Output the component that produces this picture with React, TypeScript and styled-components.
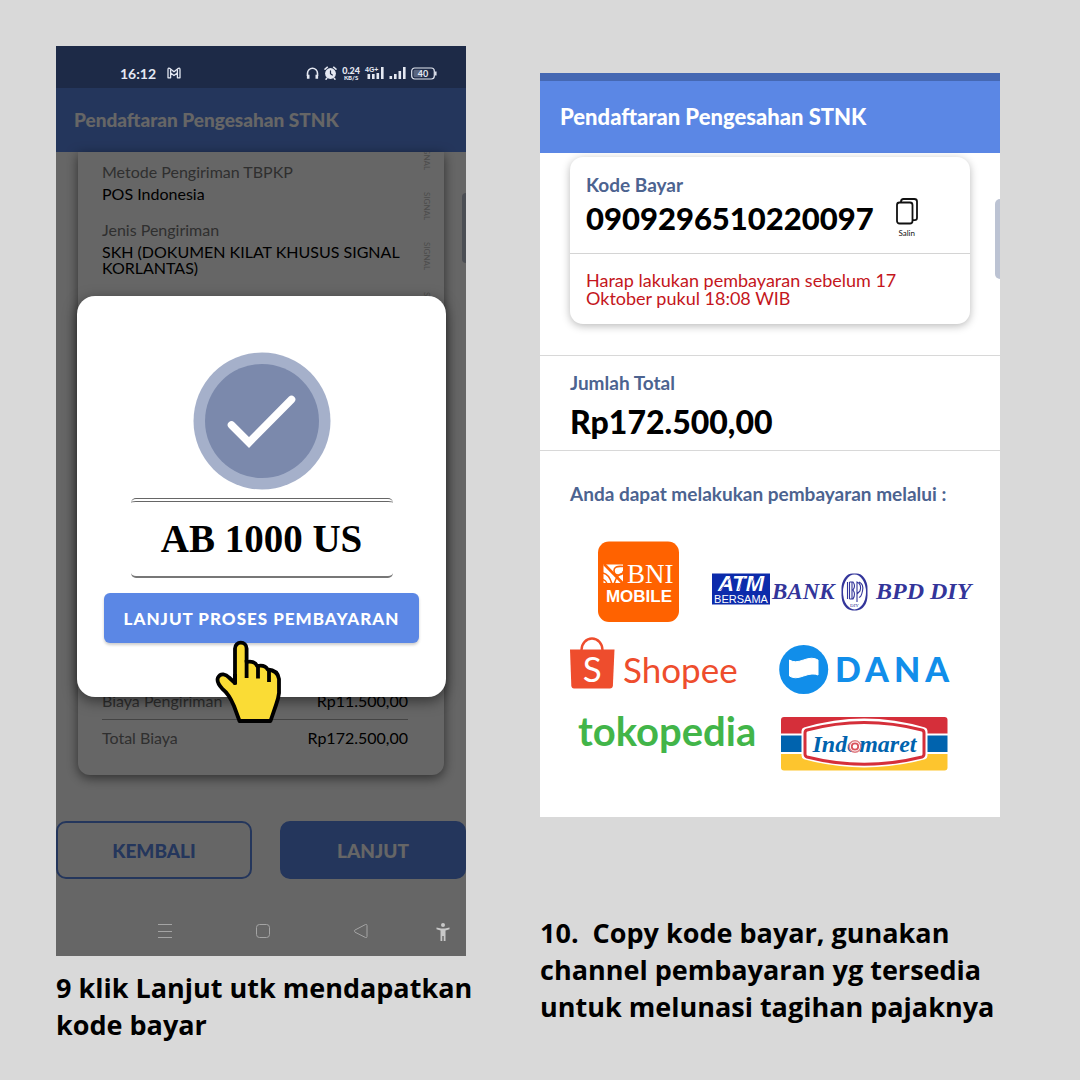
import React from "react";
import styled, { createGlobalStyle } from "styled-components";

const GlobalStyle = createGlobalStyle`
  * { box-sizing: border-box; }
  body { margin: 0; background: #d9d9d9; font-family: Lato, "Liberation Sans", sans-serif; color: #000; }
  p, h2, h3, dl, dt, dd, ul { margin: 0; padding: 0; }
  button { font-family: inherit; cursor: pointer; }
  svg { display: block; flex: none; overflow: visible; }
`;

const Page = styled.main`
  display: grid;
  grid-template-columns: 41fr 46fr;
  column-gap: 74px;
  align-items: start;
  padding: 46px 80px 32px 56px;
`;

const Step = styled.section<{ $top?: number }>`
  padding-top: ${(p) => p.$top ?? 0}px;
  min-width: 0;
`;

const Caption = styled.p<{ $gap: number }>`
  margin-top: ${(p) => p.$gap}px;
  font: 700 27px/37px "Open Sans", "Noto Sans", sans-serif;
  white-space: pre;
`;

const Screen = styled.div`
  position: relative;
  overflow: hidden;
  background: #fff;
`;

const StatusBar = styled.div`
  position: relative;
  z-index: 2;
  display: flex;
  align-items: center;
  height: 42px;
  padding: 12px 29px 0 64px;
  background: #1d2a47;
  color: #e4e8f2;
`;

const Clock = styled.span`
  font-size: 14px;
  font-weight: 700;
  margin-right: 11px;
`;

const StatusIcons = styled.div`
  display: flex;
  align-items: center;
  gap: 5px;
  margin-left: auto;
`;

const NetSpeed = styled.span`
  display: flex;
  flex-direction: column;
  align-items: center;
  font-size: 9px;
  font-weight: 900;
  line-height: 9px;
  small { font-size: 6px; line-height: 6px; }
`;

const AppBar = styled.header<{ $height: number; $size: number; $pad: number }>`
  display: flex;
  align-items: center;
  height: ${(p) => p.$height}px;
  padding-left: ${(p) => p.$pad}px;
  background: #5b87e5;
  color: #fff;
  h2 { font-size: ${(p) => p.$size}px; font-weight: 900; line-height: 24px; }
`;

const Detail = styled.div`
  display: grid;
  grid-template-columns: 1fr auto;
  overflow: hidden;
  margin: 0 22px;
  padding: 10px 12px 19px 24px;
  border-radius: 0 0 12px 12px;
  background: #fff;
  box-shadow: 0 3px 12px rgba(0, 0, 0, 0.55);
`;

const Field = styled.div`
  margin-bottom: 18px;
  font-size: 16px;
  dt { line-height: 20px; color: #777; }
  dd { line-height: 16px; padding-top: 4px; }
`;

const Watermark = styled.div`
  display: flex;
  flex-direction: column;
  align-items: center;
  gap: 20px;
  height: 0;
  margin-top: -20px;
  font-size: 8px;
  line-height: 10px;
  color: #c0c0c0;
  span { flex: none; writing-mode: vertical-rl; height: 30px; }
`;

const Fees = styled.dl`
  grid-column: 1 / -1;
  margin: 389px 24px 0 0;
  font-size: 16px;
  line-height: 20px;
`;

const FeeRow = styled.div`
  display: flex;
  justify-content: space-between;
  padding: 8px 0;
  dt { color: #777; }
  & + & { border-top: 1px solid #aaa; }
`;

const Actions = styled.div`
  display: grid;
  grid-template-columns: 196fr 186fr;
  gap: 28px;
  margin-top: 46px;
`;

const ActionButton = styled.button<{ $solid?: boolean }>`
  height: 58px;
  border: 2px solid #5b87e5;
  border-radius: 10px;
  background: ${(p) => (p.$solid ? "#5b87e5" : "transparent")};
  color: ${(p) => (p.$solid ? "#fff" : "#5b87e5")};
  font-size: 19px;
  font-weight: 900;
`;

const SystemNav = styled.nav`
  position: relative;
  z-index: 2;
  display: flex;
  justify-content: flex-end;
  gap: 67px;
  height: 77px;
  padding: 44px 16px 0 0;
  color: #a4a4a4;
`;

const NavKeys = styled.div`
  display: flex;
  gap: 82px;
`;

const Backdrop = styled.div`
  position: absolute;
  inset: 0;
  padding: 250px 20px 0 21px;
  background: rgba(0, 0, 0, 0.6);
`;

const Dialog = styled.div`
  display: flex;
  flex-direction: column;
  align-items: center;
  padding: 56px 27px 54px;
  border-radius: 18px;
  background: #fff;
  box-shadow: 0 4px 14px rgba(0, 0, 0, 0.5);
`;

const Plate = styled.div`
  width: 262px;
  margin: 8px 0 15px;
  border-top: 4px double #666;
  border-bottom: 2px solid #777;
  border-radius: 5px;
  text-align: center;
  font: 700 39px/74px "Liberation Serif", serif;
`;

const PayButton = styled.button`
  width: 100%;
  height: 50px;
  border: 0;
  border-radius: 6px;
  background: #5b87e5;
  box-shadow: 0 2px 3px rgba(0, 0, 0, 0.2);
  color: #fff;
  font-size: 17px;
  font-weight: 900;
  letter-spacing: 1px;
  white-space: nowrap;
`;

const Pointer = styled.svg`
  position: absolute;
  left: 159px;
  top: 594px;
`;

const ScrollThumb = styled.span<{ $top: number; $height: number; $width: number }>`
  position: absolute;
  right: 0;
  top: ${(p) => p.$top}px;
  width: ${(p) => p.$width}px;
  height: ${(p) => p.$height}px;
  border-radius: 5px 0 0 5px;
  background: #bcc3d3;
`;

const TopStrip = styled.div`
  height: 8px;
  background: #4568b3;
`;

const CodeCard = styled.div`
  margin: 4px 30px 31px;
  border-radius: 13px;
  box-shadow: 0 2px 9px rgba(0, 0, 0, 0.28);
`;

const CodeBlock = styled.div`
  padding: 16px 16px 15px;
  border-bottom: 1px solid #d4d4d4;
`;

const Label = styled.h3`
  font-size: 19px;
  font-weight: 700;
  line-height: 24px;
  color: #4c6390;
`;

const CodeRow = styled.div`
  display: flex;
  align-items: center;
  gap: 22px;
  height: 41px;
`;

const Big = styled.strong<{ $size: number }>`
  font-size: ${(p) => p.$size}px;
  font-weight: 900;
  line-height: 44px;
`;

const CopyButton = styled.button`
  display: flex;
  flex-direction: column;
  align-items: center;
  gap: 3px;
  padding: 0;
  border: 0;
  background: none;
  color: #111;
  font-size: 8px;
  line-height: 10px;
`;

const Notice = styled.p`
  padding: 17px 16px;
  font-size: 18px;
  line-height: 18px;
  color: #c4161c;
`;

const Total = styled.div`
  display: flex;
  flex-direction: column;
  gap: 5px;
  padding: 15px 30px 6px;
  border: solid #d8d8d8;
  border-width: 1px 0;
`;

const Channels = styled.div`
  padding: 31px 28px 45px 30px;
`;

const LogoRow = styled.li<{ $gap: number }>`
  display: flex;
  justify-content: space-between;
  margin-top: ${(p) => p.$gap}px;
`;

const LogoList = styled.ul`
  list-style: none;
`;

const sans = '"Liberation Sans", sans-serif';
const serif = '"Liberation Serif", serif';
const lato = "Lato, sans-serif";

const MailIcon = () => (
  <svg width="14" height="12" viewBox="0 0 14 12" fill="none" stroke="currentColor" strokeWidth="1.3" strokeLinejoin="round">
    <path d="M1 10.8V2.4Q1 .6 2.6 1.3L7 4.8l4.400-3.500Q13 .6 13 2.400V10.800H10.400V6L7 8.600 3.600 6v4.800z" />
    <path d="M3.600 6V2.200M10.400 6V2.200" />
  </svg>
);

const HeadphonesIcon = () => (
  <svg width="13" height="13" viewBox="0 0 13 13" fill="none" stroke="currentColor" strokeWidth="1.600">
    <path d="M1.500 9V6.300a5 5 0 0 1 10 0V9" />
    <path d="M2.200 7.800v4M10.800 7.800v4" strokeWidth="2.600" />
  </svg>
);

const AlarmIcon = () => (
  <svg width="13" height="14" viewBox="0 0 13 14" fill="none" stroke="currentColor" strokeWidth="1.500" strokeLinecap="round">
    <circle cx="6.500" cy="7.500" r="5.400" fill="currentColor" stroke="none" />
    <path d="M1 3.200 3.400 1.200M12 3.200 9.600 1.200M2.800 12.200l-.8 1M10.200 12.200l.8 1" />
    <path d="M6.500 4.800v3l1.800 1.200" stroke="#1d2a47" strokeWidth="1.200" />
  </svg>
);

const SignalIcon = ({ tag }: { tag?: string }) => (
  <svg width={tag ? 19 : 17} height="14" viewBox={tag ? "-2 0 19 14" : "0 0 17 14"} fill="currentColor">
    <rect x="0.500" y={tag ? 8 : 10} width="2.600" height={tag ? 5 : 3} />
    <rect x="5" y="8" width="2.600" height="5" />
    <rect x="9.500" y={tag ? 7 : 5} width="2.600" height={tag ? 6 : 8} />
    <rect x="14" y="1" width="2.600" height="12" />
    {tag && <text x="-2" y="6" fontSize="7" fontWeight="700" fontFamily={sans}>{tag}</text>}
  </svg>
);

const BatteryIcon = () => (
  <svg width="26" height="13" viewBox="0 0 26 13">
    <rect x=".7" y="1" width="22.600" height="11" rx="3" fill="none" stroke="currentColor" strokeWidth="1.200" />
    <rect x="2.500" y="2.800" width="8" height="7.400" rx="1.500" fill="#5b6680" />
    <path d="M24.800 4.500v4" stroke="currentColor" strokeWidth="1.500" />
    <text x="12" y="9.600" textAnchor="middle" fontSize="9" fontWeight="700" fontFamily={lato} fill="currentColor">40</text>
  </svg>
);

const SuccessBadge = () => (
  <svg width="138" height="138" viewBox="0 0 138 138">
    <circle cx="69" cy="69" r="68.500" fill="#a5b0ca" />
    <circle cx="69" cy="69" r="57" fill="#7b89ac" />
    <path d="M38.500 73 56 90.500 98.500 47.500" fill="none" stroke="#fff" strokeWidth="7.600" strokeLinecap="round" />
  </svg>
);

const Hand = () => (
  <Pointer width="68" height="84" viewBox="0 0 68 84" aria-hidden="true">
    <path
      d="M20 43V8.500a5.800 5.800 0 0 1 11.600 0V22q8-1.500 10.500 4 8-1.500 10.500 3.500 10 .5 11.400 9.500V53q-.5 5-3 12l-5.500 16H24.500L19 66Q14 54 7.500 49 1 42 3 37.500c2.500-5 8-3.500 11 0z"
      fill="#fadc35" stroke="#000" strokeWidth="3.800" strokeLinejoin="round"
    />
    <path d="M20 44.500V34M31.600 20v18M43 26v12.500M54 30v12" fill="none" stroke="#000" strokeWidth="3.800" strokeLinecap="butt" />
  </Pointer>
);

const CopyIcon = () => (
  <svg width="22" height="27" viewBox="0 0 22 27" fill="none" stroke="#111" strokeWidth="1.800" strokeLinejoin="round">
    <rect x="1" y="4.500" width="15.500" height="21" rx="2.500" />
    <path d="M5 4.300V3.500Q5 1 7.500 1h10.800Q21 1 21 3.500v16.300q0 2.400-2.400 2.400h-2" />
  </svg>
);

const BniLogo = () => (
  <svg width="112" height="81" viewBox="570 541 112 81" role="img" aria-label="BNI Mobile">
    <rect x="598" y="541.500" width="81" height="80.500" rx="11" fill="#ff6200" />
    <rect x="603.500" y="564.500" width="19.500" height="18.500" fill="#fff" />
    <g fill="none" stroke="#ff6200">
      <path d="M604 564 623 583.500" strokeWidth="2.600" />
      <path d="M603 573q6 1 9 11M623 573q-6 1-9 11" strokeWidth="1.600" />
      <path d="M603 579.500q3 1 4 4" strokeWidth="1.400" />
      <path d="M623 566.500q-9-1-9 4t5 4.500 4-4" strokeWidth="1.600" />
    </g>
    <text x="627" y="583" fontSize="27" fontFamily={serif} fill="#fff">BNI</text>
    <text x="639" y="601.500" textAnchor="middle" fontSize="17" fontWeight="700" fontFamily={sans} fill="#fff">MOBILE</text>
  </svg>
);

const AtmBpdLogo = () => (
  <svg width="261" height="81" viewBox="711 541 261 81" role="img" aria-label="ATM Bersama Bank BPD DIY">
    <rect x="712" y="573.500" width="58" height="31" fill="#0c2bab" />
    <text x="741" y="591" textAnchor="middle" fontSize="22" fontWeight="700" fontStyle="italic" fontFamily={sans} fill="#fff">ATM</text>
    <path d="M720 590.500 731 577M738.500 590l5.500-13M749 590l5-12M757 590l4-12" stroke="#0c2bab" strokeWidth=".6" />
    <text x="741" y="602.500" textAnchor="middle" fontSize="11" fontFamily={sans} fill="#fff">BERSAMA</text>
    <g fill="#33359a" fontFamily={serif} fontWeight="700" fontStyle="italic">
      <text x="772" y="598.500" fontSize="23">BANK</text>
      <text x="876" y="598.500" fontSize="24">BPD DIY</text>
    </g>
    <rect x="841.500" y="573.500" width="26" height="37" rx="11" ry="15" fill="#33359a" />
    <ellipse cx="854.500" cy="592" rx="11.500" ry="17.500" fill="#fff" />
    <g fill="none" stroke="#33359a" strokeWidth="1.100">
      <path d="M847.500 582v17M849.500 582v17M852 582v17M849.500 582h3.500q3 4 0 8 3 4 0 9h-3.500M857 602v-20q5 2 3 9l-3 3M859 582q5 2 3.500 9t-3.500 6" />
    </g>
    <text x="854.500" y="607" textAnchor="middle" fontSize="5" fontFamily={serif} fill="#33359a">DIY</text>
  </svg>
);

const ShopeeLogo = () => (
  <svg width="172" height="57" viewBox="570 637 172 57" role="img" aria-label="Shopee">
    <path d="M581.500 650a10.500 11.500 0 0 1 21 0" fill="none" stroke="#ee4d2d" strokeWidth="2.400" />
    <path d="M570 649.500h44.500l-1.600 36q-.2 3-3 3H574q-2.500 0-2.700-3z" fill="#ee4d2d" />
    <text x="592.300" y="681.500" textAnchor="middle" fontSize="35" fontFamily={lato} fill="#fff">S</text>
    <text x="623" y="682.500" fontSize="35" fontFamily={lato} fill="#ee4d2d">Shopee</text>
  </svg>
);

const DanaLogo = () => (
  <svg width="193" height="57" viewBox="779 637 193 57" role="img" aria-label="DANA">
    <circle cx="803.700" cy="669.500" r="24.500" fill="#118eea" />
    <path d="M789.500 660q5 3.500 14 0 9-3.500 14.500 0v15q-5-2.500-14.500 1-9 3.500-14 0z" fill="#fff" stroke="#fff" strokeLinejoin="round" />
    <text x="835" y="682" fontSize="34" fontWeight="900" fontFamily={lato} letterSpacing="5" fill="#118eea">DANA</text>
  </svg>
);

const TokopediaLogo = () => (
  <svg width="186" height="57" viewBox="570 715 186 57" role="img" aria-label="tokopedia">
    <text x="578" y="746" fontSize="40" fontWeight="700" fontFamily={lato} fill="#42b549">tokopedia</text>
  </svg>
);

const IndomaretLogo = () => (
  <svg width="191" height="57" viewBox="781 715 191 57" role="img" aria-label="Indomaret">
    <rect x="781" y="716.500" width="166.500" height="54.500" rx="3" fill="#fff" />
    <path d="M784 717h160.500q3 0 3 3v13.500H781V720q0-3 3-3z" fill="#d52f3a" />
    <path d="M781 735.500h166.500v16.500H781z" fill="#0063ae" />
    <path d="M781 754h166.500v13.500q0 3-3 3H784q-3 0-3-3z" fill="#fdc52e" />
    <path d="M804 727.500Q864 709.500 925 727.500q2.500.7 2.500 3.500v24.500q0 3-2.500 3.700-61 16.500-121 0-2.500-.7-2.500-3.700V731q0-2.800 2.500-3.500z" fill="#fff" />
    <path d="M807 730Q864 715 922 730q2 .6 2 3v21q0 2.400-2 3-58 14.500-115 0-2-.6-2-3v-21q0-2.400 2-3z" fill="#fff" stroke="#d52f3a" strokeWidth="3" />
    <text x="864.500" y="752" textAnchor="middle" fontSize="24" fontWeight="700" fontStyle="italic" fontFamily={serif} fill="#0063ae">Indomaret</text>
    <circle cx="855" cy="746.500" r="5.800" fill="#fff" stroke="#e27f85" strokeWidth="1.400" />
    <circle cx="855" cy="746.500" r="3.200" fill="#fff" stroke="#d9525c" strokeWidth="1.800" />
  </svg>
);

export default function App() {
  return (
    <>
      <GlobalStyle />
      <Page>
        <Step>
          <Screen>
            <StatusBar>
              <Clock>16:12</Clock>
              <MailIcon />
              <StatusIcons>
                <HeadphonesIcon />
                <AlarmIcon />
                <NetSpeed>0.24<small>KB/S</small></NetSpeed>
                <SignalIcon tag="4G+" />
                <SignalIcon />
                <BatteryIcon />
              </StatusIcons>
            </StatusBar>
            <AppBar $height={64} $size={19} $pad={18}><h2>Pendaftaran Pengesahan STNK</h2></AppBar>
            <Detail>
              <dl>
                <Field><dt>Metode Pengiriman TBPKP</dt><dd>POS Indonesia</dd></Field>
                <Field><dt>Jenis Pengiriman</dt><dd>SKH (DOKUMEN KILAT KHUSUS SIGNAL KORLANTAS)</dd></Field>
              </dl>
              <Watermark aria-hidden="true">
                <span>SIGNAL</span><span>SIGNAL</span><span>SIGNAL</span><span>SIGNAL</span>
              </Watermark>
              <Fees>
                <FeeRow><dt>Biaya Pengiriman</dt><dd>Rp11.500,00</dd></FeeRow>
                <FeeRow><dt>Total Biaya</dt><dd>Rp172.500,00</dd></FeeRow>
              </Fees>
            </Detail>
            <Actions>
              <ActionButton type="button">KEMBALI</ActionButton>
              <ActionButton type="button" $solid>LANJUT</ActionButton>
            </Actions>
            <SystemNav>
              <NavKeys>
                <svg width="16" height="16" viewBox="0 0 16 16" stroke="currentColor"><path d="M1 1.500h14M1 8.500h14M1 14.500h14" /></svg>
                <svg width="16" height="16" viewBox="0 0 16 16" fill="none" stroke="currentColor"><rect x="1.500" y="1.500" width="13" height="13" rx="3" /></svg>
                <svg width="16" height="16" viewBox="0 0 16 16" fill="none" stroke="currentColor" strokeLinejoin="round"><path d="M1.500 8.200Q1 7.500 2 7L12.500 1.500q1.500-.5 1.500 1v11q0 1.500-1.500 1L2 9.200z" /></svg>
              </NavKeys>
              <svg width="14" height="18" viewBox="0 0 14 18" fill="#c8c8c8"><circle cx="7" cy="2" r="2" /><path d="M.5 4.500 5 5.500h4l4.500-1v1.800L9.500 7.500V18H7.700v-5H6.300v5H4.500V7.500L.5 6.300z" /></svg>
            </SystemNav>
            <ScrollThumb $top={147} $height={70} $width={4} />
            <Backdrop>
              <Dialog role="dialog" aria-label="Lanjut proses pembayaran">
                <SuccessBadge />
                <Plate>AB 1000 US</Plate>
                <PayButton type="button">LANJUT PROSES PEMBAYARAN</PayButton>
              </Dialog>
            </Backdrop>
            <Hand />
          </Screen>
          <Caption $gap={13}>{"9 klik Lanjut utk mendapatkan\nkode bayar"}</Caption>
        </Step>

        <Step $top={27}>
          <Screen>
            <TopStrip />
            <AppBar $height={72} $size={22} $pad={20}><h2>Pendaftaran Pengesahan STNK</h2></AppBar>
            <CodeCard>
              <CodeBlock>
                <Label>Kode Bayar</Label>
                <CodeRow>
                  <Big $size={31}>0909296510220097</Big>
                  <CopyButton type="button"><CopyIcon />Salin</CopyButton>
                </CodeRow>
              </CodeBlock>
              <Notice>Harap lakukan pembayaran sebelum 17 Oktober pukul 18:08 WIB</Notice>
            </CodeCard>
            <Total>
              <Label>Jumlah Total</Label>
              <Big $size={32}>Rp172.500,00</Big>
            </Total>
            <Channels>
              <Label>Anda dapat melakukan pembayaran melalui :</Label>
              <LogoList>
                <LogoRow $gap={35}><BniLogo /><AtmBpdLogo /></LogoRow>
                <LogoRow $gap={15}><ShopeeLogo /><DanaLogo /></LogoRow>
                <LogoRow $gap={21}><TokopediaLogo /><IndomaretLogo /></LogoRow>
              </LogoList>
            </Channels>
            <ScrollThumb $top={126} $height={80} $width={5} />
          </Screen>
          <Caption $gap={97}>{"10.  Copy kode bayar, gunakan\nchannel pembayaran yg tersedia\nuntuk melunasi tagihan pajaknya"}</Caption>
        </Step>
      </Page>
    </>
  );
}
